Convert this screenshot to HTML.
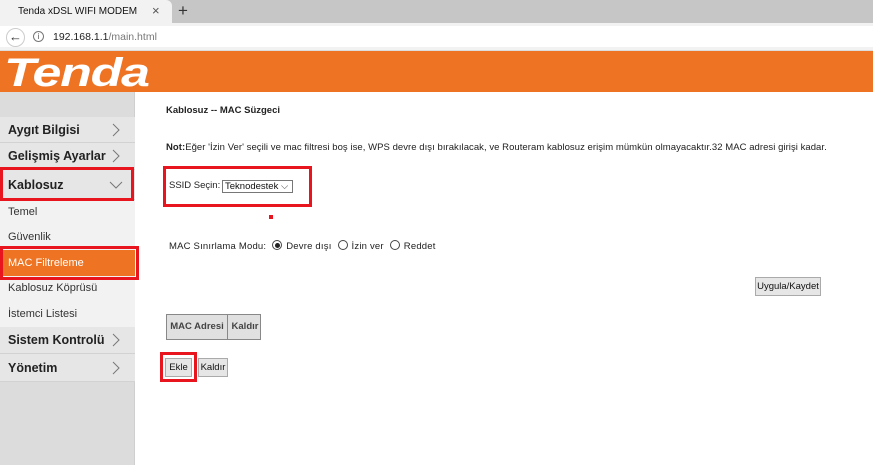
<!DOCTYPE html>
<html><head><meta charset="utf-8">
<style>
*{margin:0;padding:0;box-sizing:border-box}
body{width:873px;height:465px;overflow:hidden;background:#fff;font-family:"Liberation Sans",sans-serif;position:relative}
.abs{position:absolute}
#tabs{left:0;top:0;width:873px;height:23px;background:#c6c6c6}
#tab{left:0;top:0;width:172px;height:23px;background:#f2f2f2;border-radius:0 6px 0 0;font-size:10px;color:#111;padding:6px 0 0 18px}
#addr{left:0;top:23px;width:873px;height:28px;background:#f2f2f2;border-bottom:1px solid #ddd}
#addrin{left:0;top:26px;width:873px;height:21px;background:#fff}
#orange{left:0;top:51px;width:873px;height:41px;background:#ee7322}
.logo{left:4px;top:53px;color:#fff;font-size:40px;font-weight:bold;font-style:italic;letter-spacing:-1px;line-height:40px;transform:scaleX(1.3);transform-origin:left}
#side{left:0;top:92px;width:135px;height:373px;background:#dcdcdc;border-right:1px solid #cfcfcf}
.m{position:absolute;left:0;width:135px;background:#e6e6e6;border-bottom:1px solid #d2d2d2;font-size:12.5px;font-weight:bold;color:#222;padding-left:8px;white-space:nowrap}
.s{position:absolute;left:0;width:135px;background:#f2f2f2;font-size:11px;color:#333;padding-left:8px;white-space:nowrap}
.arr{position:absolute;right:14px;top:50%;margin-top:-7px;width:10px;height:14px}
.t{position:absolute;font-size:9.5px;color:#222;white-space:nowrap}
.red{position:absolute;border:3px solid #e8141e}
.btn{position:absolute;background:#e6e6e6;border:1px solid #aaa;font-size:9.5px;color:#111;text-align:center;white-space:nowrap}
.rad{display:inline-block;width:10px;height:10px;border:1px solid #444;border-radius:50%;vertical-align:-1px;margin:0 4px 0 6px;position:relative}
</style></head><body>
<div id="tabs" class="abs"></div>
<div id="tab" class="abs">Tenda xDSL WIFI MODEM<span style="position:absolute;left:152px;top:3px;font-size:13px;color:#555">×</span></div>
<div class="abs" style="left:178px;top:1px;font-size:17px;color:#333">+</div>
<div id="addr" class="abs"></div>
<div id="addrin" class="abs"></div>
<div class="abs" style="left:6px;top:28px;width:19px;height:19px;border:1px solid #ccc;border-radius:50%;font-size:13px;text-align:center;line-height:16px;color:#333;background:#fff">←</div>
<div class="abs" style="left:33px;top:31px;width:11px;height:11px;border:1px solid #777;border-radius:50%;font-size:8px;text-align:center;line-height:10px;color:#555">i</div>
<div class="abs" style="left:53px;top:31px;font-size:10.5px;color:#222">192.168.1.1<span style="color:#777">/main.html</span></div>
<div id="orange" class="abs"></div>
<div class="abs logo">Tenda</div>

<div id="side" class="abs">
<div class="m" style="top:25px;height:26px;line-height:26px">Aygıt Bilgisi<svg class="arr"><path d="M2 1 L8 7 L2 13" stroke="#777" fill="none"/></svg></div>
<div class="m" style="top:51px;height:27px;line-height:27px">Gelişmiş Ayarlar<svg class="arr"><path d="M2 1 L8 7 L2 13" stroke="#777" fill="none"/></svg></div>
<div class="m" style="top:78px;height:30px;line-height:30px">Kablosuz<svg style="position:absolute;right:12px;top:10px" width="14" height="10"><path d="M1 2 L7 8 L13 2" stroke="#777" fill="none"/></svg></div>
<div class="s" style="top:108px;height:25px;line-height:25px">Temel</div>
<div class="s" style="top:133px;height:25px;line-height:25px">Güvenlik</div>
<div class="s" style="top:158px;height:26px;line-height:26px;background:#ee7322;color:#fff">MAC Filtreleme</div>
<div class="s" style="top:184px;height:25px;line-height:25px">Kablosuz Köprüsü</div>
<div class="s" style="top:209px;height:26px;line-height:26px">İstemci Listesi</div>
<div class="m" style="top:235px;height:27px;line-height:27px">Sistem Kontrolü<svg class="arr"><path d="M2 1 L8 7 L2 13" stroke="#777" fill="none"/></svg></div>
<div class="m" style="top:262px;height:28px;line-height:28px">Yönetim<svg class="arr"><path d="M2 1 L8 7 L2 13" stroke="#777" fill="none"/></svg></div>
</div>
<div class="red" style="left:0;top:167px;width:134px;height:34px"></div>
<div class="red" style="left:0;top:246px;width:139px;height:34px"></div>

<div class="t" style="left:166px;top:105px;font-weight:bold">Kablosuz -- MAC Süzgeci</div>
<div class="t" style="left:166px;top:142px;letter-spacing:0.05px"><b>Not:</b>Eğer 'İzin Ver' seçili ve mac filtresi boş ise, WPS devre dışı bırakılacak, ve Routeram kablosuz erişim mümkün olmayacaktır.32 MAC adresi girişi kadar.</div>
<div class="red" style="left:163px;top:166px;width:149px;height:41px"></div>
<div class="t" style="left:169px;top:180px">SSID Seçin:</div>
<div class="abs" style="left:222px;top:180px;width:71px;height:13px;border:1px solid #777;font-size:9.5px;padding-left:2px;line-height:11px;color:#111;white-space:nowrap">Teknodestek <span style="color:#555">⌵</span></div>
<div class="abs" style="left:269px;top:215px;width:4px;height:4px;background:#e8141e"></div>
<div class="t" style="left:169px;top:240px;letter-spacing:0.2px">MAC Sınırlama Modu:<span class="rad"><span style="position:absolute;left:2px;top:2px;width:5px;height:5px;border-radius:50%;background:#222"></span></span>Devre dışı<span class="rad"></span>İzin ver<span class="rad"></span>Reddet</div>
<div class="btn" style="left:755px;top:277px;width:66px;height:19px;line-height:17px">Uygula/Kaydet</div>
<div class="abs" style="left:166px;top:314px;width:95px;height:26px;border:1px solid #888;background:#e0e0e0;font-size:9.5px;font-weight:bold;color:#444;line-height:24px;white-space:nowrap">
<span style="position:absolute;left:0;width:61px;text-align:center;border-right:1px solid #888;height:24px">MAC Adresi</span><span style="position:absolute;left:62px;width:32px;text-align:center">Kaldır</span></div>
<div class="red" style="left:160px;top:352px;width:37px;height:30px"></div>
<div class="btn" style="left:165px;top:358px;width:27px;height:19px;line-height:17px">Ekle</div>
<div class="btn" style="left:198px;top:358px;width:30px;height:19px;line-height:17px">Kaldır</div>
</body></html>
